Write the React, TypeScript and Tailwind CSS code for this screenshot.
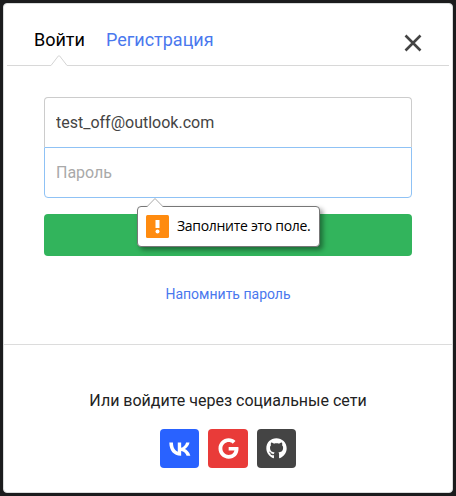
import React from 'react';
import { FaGithub, FaGoogle } from 'react-icons/fa';

function Header() {
  return (
    <header className="mx-[3px] h-[62px] shrink-0">
      <div className="flex h-[51px] items-start pl-[27px] pr-[27px] text-[18px] leading-6">
        <a className="mt-6 text-black">Войти</a>
        <a className="ml-[21px] mt-6 text-[#4a78ee]">Регистрация</a>
        <button type="button" aria-label="Закрыть" className="ml-auto mt-[30px]">
          <svg width="18" height="18" viewBox="0 0 18 18" fill="none" stroke="#444" strokeWidth="2.6">
            <path d="M1.5 1.5l15 15M16.5 1.5l-15 15" />
          </svg>
        </button>
      </div>
      <div className="flex h-[11px] items-end">
        <div className="h-px w-[44px] bg-[#d8d8d8]" />
        <svg width="16" height="11" viewBox="0 0 16 11" fill="none" stroke="#d4d4d4">
          <path d="M0 10.5L7.3 1Q8 .2 8.7 1L16 10.5" />
        </svg>
        <div className="h-px flex-1 bg-[#d8d8d8]" />
      </div>
    </header>
  );
}

function ValidationHint() {
  return (
    <div className="absolute left-[93px] top-[109px] flex h-[41px] w-[183px] items-center rounded-[4px] border border-[#777] bg-white pl-2 shadow-[3px_3px_5px_rgba(0,0,0,0.4)]">
      <svg className="absolute left-[8px] top-[-10px]" width="18" height="11" viewBox="0 0 18 11">
        <path d="M1 10L9 1.5l8 8.5v1H1z" fill="#fff" />
        <path d="M1 9.7L9 1.5l8 8.2" fill="none" stroke="#aaa" />
      </svg>
      <svg width="23" height="23" viewBox="0 0 23 23">
        <rect width="23" height="23" rx="1.5" fill="#ff8b0f" />
        <path d="M9.5 5h4v8h-4z" fill="#fff" />
        <circle cx="11.5" cy="16.5" r="2" fill="#fff" />
      </svg>
      <span className="mb-0.5 ml-2 whitespace-nowrap font-['Open_Sans',sans-serif] text-[14px] leading-5 tracking-[-0.3px] text-black">
        Заполните это поле.
      </span>
    </div>
  );
}

function LoginForm() {
  return (
    <form className="relative mx-10 mt-[31px] flex flex-col">
      <input
        type="text"
        defaultValue="test_off@outlook.com"
        className="h-[50px] rounded-t-[4px] border border-b-0 border-[#ccc] px-[11px] text-[16px] text-[#444] outline-none"
      />
      <input
        type="password"
        placeholder="Пароль"
        className="h-[51px] rounded-b-[4px] border border-[#8fc2f5] px-[11px] text-[16px] outline-none placeholder:text-[#a9a9a9]"
      />
      <button type="button" aria-label="Войти" className="mt-4 h-[42px] rounded-[4px] bg-[#32b45c]" />
      <ValidationHint />
    </form>
  );
}

function SocialLogin() {
  return (
    <section className="mt-10 flex flex-1 flex-col items-center border-t border-[#dcdcdc]">
      <p className="mt-11 text-[16px] leading-6 text-[#222]">Или войдите через социальные сети</p>
      <div className="mt-4 flex">
        <a className="flex h-[39px] w-[39px] items-center justify-center rounded-[4px] bg-[#2962ff]">
          <svg width="31.5" height="31.5" viewBox="0 0 48 48" fill="#fff">
            <path d="M25.54 34.58c-10.94 0-17.18-7.5-17.44-19.98h5.48c.18 9.16 4.22 13.04 7.42 13.84V14.6h5.16v7.9c3.16-.34 6.48-3.94 7.6-7.9h5.16c-.86 4.88-4.46 8.48-7.02 9.96 2.56 1.2 6.66 4.34 8.22 10.02h-5.68c-1.22-3.8-4.26-6.74-8.28-7.14v7.14h-.62z" />
          </svg>
        </a>
        <a className="ml-[9px] flex h-[39px] w-10 items-center justify-center rounded-[4px] bg-[#e93b39]">
          <FaGoogle size={21} color="#fff" />
        </a>
        <a className="ml-[9px] flex h-[39px] w-[39px] items-center justify-center rounded-[4px] bg-[#444]">
          <FaGithub size={21} color="#fff" />
        </a>
      </div>
    </section>
  );
}

export default function App() {
  return (
    <div className="flex h-screen w-full bg-[#1b1c1d] p-[3px] font-[Roboto,sans-serif]">
      <main className="flex flex-1 flex-col rounded-[4px] border border-[#d9dcdc] bg-white">
        <Header />
        <LoginForm />
        <a className="mt-7 self-center text-[14px] leading-5 text-[#4a78ee]">Напомнить пароль</a>
        <SocialLogin />
      </main>
    </div>
  );
}
